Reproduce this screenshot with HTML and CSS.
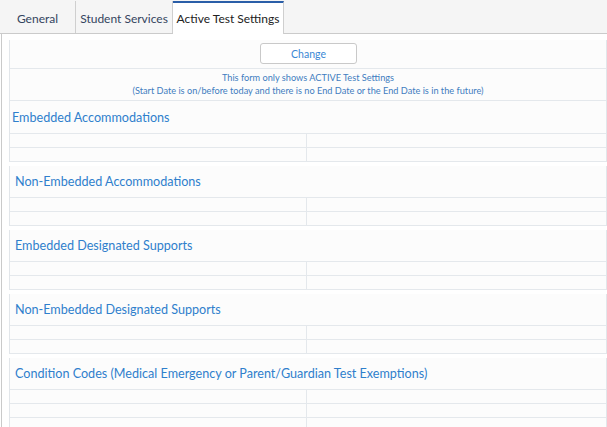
FILE: index.html
```html
<!DOCTYPE html>
<html lang="en">
<head>
<meta charset="utf-8">
<title>Active Test Settings</title>
<link rel="stylesheet" href="styles.css">
</head>
<body>
<div class="tabs">
  <div class="tab tab-general">General</div>
  <div class="tab tab-services">Student Services</div>
  <div class="tab tab-active">Active Test Settings</div>
</div>
<div class="pane">
  <div class="panel">
    <div class="toolbar"><button class="btn" type="button">Change</button></div>
    <div class="notice">
      <p>This form only shows ACTIVE Test Settings</p>
      <p>(Start Date is on/before today and there is no End Date or the End Date is in the future)</p>
    </div>
    <div class="section-head section-head-first">Embedded Accommodations</div>
    <div class="row"><div class="cell"></div><div class="cell"></div></div>
    <div class="row"><div class="cell"></div><div class="cell"></div></div>
  </div>
  <div class="panel">
    <div class="section-head">Non-Embedded Accommodations</div>
    <div class="row"><div class="cell"></div><div class="cell"></div></div>
    <div class="row"><div class="cell"></div><div class="cell"></div></div>
  </div>
  <div class="panel">
    <div class="section-head">Embedded Designated Supports</div>
    <div class="row"><div class="cell"></div><div class="cell"></div></div>
    <div class="row"><div class="cell"></div><div class="cell"></div></div>
  </div>
  <div class="panel">
    <div class="section-head">Non-Embedded Designated Supports</div>
    <div class="row"><div class="cell"></div><div class="cell"></div></div>
    <div class="row"><div class="cell"></div><div class="cell"></div></div>
  </div>
  <div class="panel">
    <div class="section-head">Condition Codes (Medical Emergency or Parent/Guardian Test Exemptions)</div>
    <div class="row"><div class="cell"></div><div class="cell"></div></div>
    <div class="row"><div class="cell"></div><div class="cell"></div></div>
    <div class="row"><div class="cell"></div><div class="cell"></div></div>
  </div>
</div>
</body>
</html>
```
FILE: styles.css
```css
* { box-sizing: border-box; }

html, body {
  margin: 0;
  padding: 0;
  background: #ffffff;
  height: 427px;
  overflow: hidden;
}

body {
  font-family: Lato, "Open Sans", "Liberation Sans", sans-serif;
  color: #333;
}

.tabs {
  display: flex;
  align-items: flex-start;
  height: 34px;
  padding-top: 1px;
  background: #f5f5f5;
  border-bottom: 1px solid #cbcbcb;
}

.tab {
  height: 32px;
  display: flex;
  align-items: center;
  justify-content: center;
  font-size: 12px;
  color: #34445e;
  border-right: 1px solid #cfcfcf;
  white-space: nowrap;
  padding-top: 2px;
}

.tab-general { width: 76px; }
.tab-services { width: 97px; }

.tab-active {
  width: 111px;
  height: 33px;
  background: #ffffff;
  border-top: 2px solid #2a5ea8;
  color: #222;
  padding-top: 0;
  position: relative;
  z-index: 1;
}

.pane {
  margin-left: 1px;
  border-left: 1px solid #cacaca;
  padding: 6px 0 0 7px;
  height: 393px;
  overflow: hidden;
}

.panel {
  background: #fcfcfc;
  border-left: 1px solid #e2e6ea;
  border-right: 1px solid #e2e6ea;
  margin-bottom: 4px;
}

.toolbar {
  height: 29px;
  border-bottom: 1px solid #e4e8ec;
  display: flex;
  justify-content: center;
  padding-top: 3px;
}

.btn {
  width: 97px;
  height: 21px;
  margin: 0 0 0 1px;
  padding: 0;
  border: 1px solid #c9c9c9;
  border-radius: 3px;
  background: #ffffff;
  color: #3a87d4;
  font-family: inherit;
  font-size: 10.5px;
}

.notice {
  height: 32px;
  border-bottom: 1px solid #e4e8ec;
  padding-top: 2px;
  text-align: center;
  color: #3f7cc0;
  font-size: 9.2px;
  line-height: 13px;
}

.notice p { margin: 0; }

.section-head {
  height: 32px;
  border-bottom: 1px solid #e4e8ec;
  display: flex;
  align-items: center;
  padding-left: 5px;
  color: #2f7fcc;
  font-size: 12.6px;
  white-space: nowrap;
}

.section-head-first {
  height: 33px;
  padding-left: 2px;
}

.row {
  display: grid;
  grid-template-columns: 297px 1fr;
  height: 14px;
  border-bottom: 1px solid #e4e8ec;
}

.cell:first-child { border-right: 1px solid #e4e8ec; }
```
